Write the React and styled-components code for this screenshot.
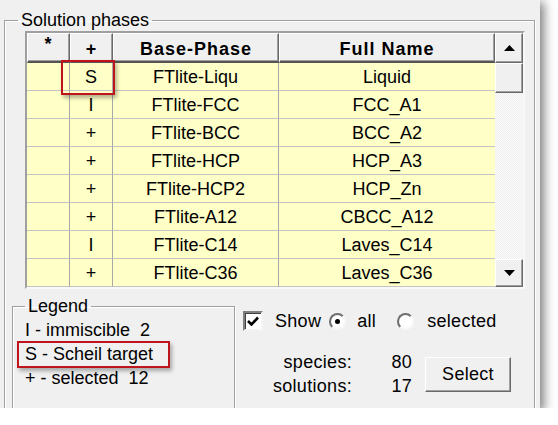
import React from "react";
import styled, { createGlobalStyle } from "styled-components";

const GlobalStyle = createGlobalStyle`
    body {
        margin: 0;
        background: #fff;
        font-family: "Liberation Sans", Arial, sans-serif;
        color: #000;
    }
`;

const Window = styled.div`
    position: relative;
    box-sizing: border-box;
    width: 540px;
    height: 408px;
    padding: 11px 0 0 4px;
    background: #f0f0f0;
    overflow: hidden;
    box-shadow: 3px 3px 10px 1px rgba(0, 0, 0, 0.5);
`;

const GroupBox = styled.fieldset`
    box-sizing: border-box;
    margin: 0;
    padding: 0;
    width: ${(p) => p.$width}px;
    height: ${(p) => p.$height}px;
    border: 1px solid #a0a0a0;
    box-shadow: inset 1px 1px 0 #fff, 1px 1px 0 #fff;
    flex-shrink: 0;
`;

const GroupTitle = styled.legend`
    margin-left: ${(p) => p.$indent}px;
    padding: 0 3px;
    font-size: 18px;
    line-height: 18px;
`;

const Table = styled.div`
    display: flex;
    width: 500px;
    box-sizing: border-box;
    margin: 2px 0 0 20px;
    border: 2px solid;
    border-color: #a0a0a0 #f8f8f8 #f8f8f8 #a0a0a0;
`;

const Grid = styled.div`
    display: grid;
    grid-template-columns: 43px 43px 166px 216px;
    grid-auto-rows: 28px;
    grid-template-rows: 30px;
`;

const HeadCell = styled.div`
    box-sizing: border-box;
    display: flex;
    justify-content: center;
    align-items: ${(p) => (p.$star ? "flex-start" : "center")};
    padding-top: ${(p) => (p.$star ? "0" : "3px")};
    background: #f0f0f0;
    border-top: 1px solid #fff;
    border-left: 1px solid #fff;
    border-right: 1px solid #696969;
    border-bottom: 2px solid #555;
    box-shadow: inset -1px -1px 0 #a0a0a0;
    font-size: 18px;
    font-weight: bold;
    letter-spacing: 1px;
`;

const Cell = styled.div`
    box-sizing: border-box;
    display: flex;
    align-items: center;
    justify-content: center;
    background: #ffffc8;
    border-bottom: 1px solid #c4c4c4;
    border-right: ${(p) => (p.$last ? "none" : "1px solid #a8a8a8")};
    font-size: 18px;
    padding-top: 1px;
`;

const ScrollBar = styled.div`
    display: flex;
    flex-direction: column;
    width: 28px;
`;

const ScrollButton = styled.div`
    box-sizing: border-box;
    display: flex;
    align-items: center;
    justify-content: center;
    height: ${(p) => p.$h}px;
    background: #f0f0f0;
    border-top: 1px solid #fff;
    border-left: 1px solid #fff;
    border-right: 1px solid #696969;
    border-bottom: 1px solid #696969;
    box-shadow: inset -1px -1px 0 #a0a0a0;
`;

const Track = styled.div`
    flex: 1;
    background: repeating-conic-gradient(#fdfdfd 0 25%, #ececec 0 50%) 0 0 / 2px 2px;
`;

const Bottom = styled.div`
    display: flex;
    margin: 8px 0 0 7px;
`;

const LegendLines = styled.div`
    padding: 3px 0 0 12px;
    font-size: 18px;
    line-height: 24px;
    white-space: pre;
`;

const Panel = styled.div`
    display: flex;
    flex-direction: column;
    margin-left: 8px;
    padding-top: 14px;
    font-size: 18px;
    letter-spacing: 0.3px;
`;

const OptionRow = styled.div`
    display: flex;
    align-items: center;
    height: 20px;
`;

const CheckBox = styled.div`
    box-sizing: border-box;
    width: 20px;
    height: 20px;
    display: flex;
    align-items: center;
    justify-content: center;
    background: #fff;
    border: 2px solid;
    border-color: #808080 #f4f4f4 #f4f4f4 #808080;
    box-shadow: inset 1px 1px 0 #404040;
    margin-right: 12px;
`;

const Radio = styled.div`
    box-sizing: border-box;
    width: 17px;
    height: 17px;
    border-radius: 50%;
    border: 2px solid;
    border-color: #6e6e6e #f8f8f8 #f8f8f8 #6e6e6e;
    background: #fff;
    display: flex;
    align-items: center;
    justify-content: center;
    margin: 0 ${(p) => p.$gap}px 0 ${(p) => p.$lead}px;

    &::after {
        content: "";
        display: ${(p) => (p.$on ? "block" : "none")};
        width: 5px;
        height: 5px;
        border-radius: 50%;
        background: #000;
    }
`;

const StatsRow = styled.div`
    display: flex;
    align-items: center;
    margin-top: 19px;
`;

const Stats = styled.div`
    display: grid;
    grid-template-columns: 109px 60px;
    line-height: 24px;
    text-align: right;
`;

const Button = styled.div`
    box-sizing: border-box;
    width: 86px;
    height: 35px;
    margin-left: 13px;
    display: flex;
    align-items: center;
    justify-content: center;
    background: #f0f0f0;
    border-top: 1px solid #fff;
    border-left: 1px solid #fff;
    border-right: 1px solid #696969;
    border-bottom: 1px solid #696969;
    box-shadow: inset -1px -1px 0 #a0a0a0;
    font-size: 18px;
`;

const Highlight = styled.div`
    position: absolute;
    left: ${(p) => p.$x}px;
    top: ${(p) => p.$y}px;
    width: ${(p) => p.$w}px;
    height: ${(p) => p.$h}px;
    box-sizing: border-box;
    border: 2px solid #c0141c;
    box-shadow: 2px 3px 4px rgba(0, 0, 0, 0.3);
`;

const phases = [
    ["S", "FTlite-Liqu", "Liquid"],
    ["I", "FTlite-FCC", "FCC_A1"],
    ["+", "FTlite-BCC", "BCC_A2"],
    ["+", "FTlite-HCP", "HCP_A3"],
    ["+", "FTlite-HCP2", "HCP_Zn"],
    ["+", "FTlite-A12", "CBCC_A12"],
    ["I", "FTlite-C14", "Laves_C14"],
    ["+", "FTlite-C36", "Laves_C36"]
];

const Arrow = ({ up }) => (
    <svg width="11" height="6" viewBox="0 0 11 6">
        <path d={up ? "M0 6 L5.5 0 L11 6 Z" : "M0 0 L5.5 6 L11 0 Z"} fill="#000" />
    </svg>
);

export default function App() {
    return (
        <>
            <GlobalStyle />
            <Window>
                <GroupBox $width={531} $height={430}>
                    <GroupTitle $indent={13}>Solution phases</GroupTitle>
                    <Table>
                        <Grid>
                            <HeadCell $star>*</HeadCell>
                            <HeadCell>+</HeadCell>
                            <HeadCell>Base-Phase</HeadCell>
                            <HeadCell>Full Name</HeadCell>
                            {phases.map(([mark, base, full]) => (
                                <React.Fragment key={base}>
                                    <Cell />
                                    <Cell>{mark}</Cell>
                                    <Cell>{base}</Cell>
                                    <Cell $last>{full}</Cell>
                                </React.Fragment>
                            ))}
                        </Grid>
                        <ScrollBar>
                            <ScrollButton $h={30}>
                                <Arrow up />
                            </ScrollButton>
                            <ScrollButton $h={30} />
                            <Track />
                            <ScrollButton $h={28}>
                                <Arrow />
                            </ScrollButton>
                        </ScrollBar>
                    </Table>
                    <Bottom>
                        <GroupBox $width={223} $height={140}>
                            <GroupTitle $indent={12}>Legend</GroupTitle>
                            <LegendLines>
                                <div>{"I - immiscible  2"}</div>
                                <div>{"S - Scheil target"}</div>
                                <div>{"+ - selected  12"}</div>
                            </LegendLines>
                        </GroupBox>
                        <Panel>
                            <OptionRow>
                                <CheckBox>
                                    <svg width="12" height="10" viewBox="0 0 12 10">
                                        <path d="M1 5 L4.5 8.5 L11 1.5" fill="none" stroke="#000" strokeWidth="2.6" />
                                    </svg>
                                </CheckBox>
                                <span>Show</span>
                                <Radio $on $lead={8} $gap={11} />
                                <span>all</span>
                                <Radio $lead={21} $gap={13} />
                                <span>selected</span>
                            </OptionRow>
                            <StatsRow>
                                <Stats>
                                    <span>species:</span>
                                    <span>80</span>
                                    <span>solutions:</span>
                                    <span>17</span>
                                </Stats>
                                <Button>Select</Button>
                            </StatsRow>
                        </Panel>
                    </Bottom>
                </GroupBox>
                <Highlight $x={61} $y={60} $w={54} $h={35} />
                <Highlight $x={17} $y={341} $w={153} $h={27} />
            </Window>
        </>
    );
}
